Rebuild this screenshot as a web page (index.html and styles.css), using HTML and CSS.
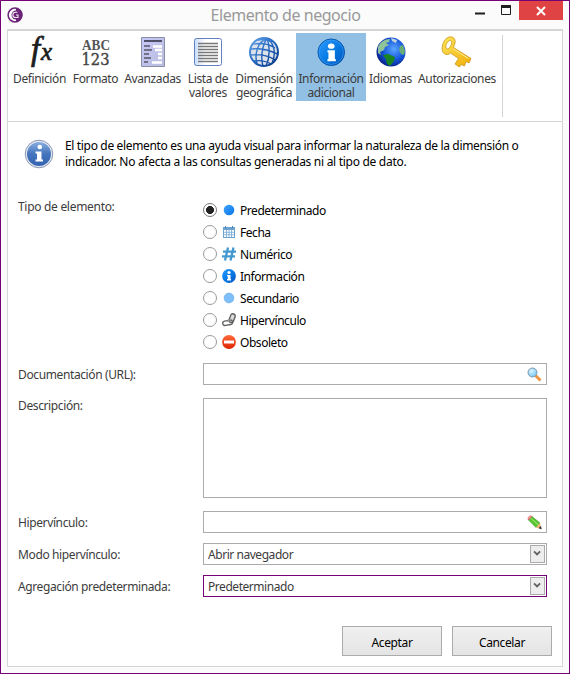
FILE: index.html
```html
<!DOCTYPE html>
<html lang="es">
<head>
<meta charset="utf-8">
<title>Elemento de negocio</title>
<link rel="stylesheet" href="styles.css">
</head>
<body>
<svg class="defs" width="0" height="0" aria-hidden="true">
  <defs>
    <linearGradient id="blue" x1="0" y1="0" x2="1" y2="1"><stop offset="0" stop-color="#2c9cff"/><stop offset=".5" stop-color="#087be5"/><stop offset="1" stop-color="#0054bd"/></linearGradient>
    <linearGradient id="dot" x1="0" y1="0" x2="1" y2="1"><stop offset="0" stop-color="#3fa4ff"/><stop offset="1" stop-color="#0874e8"/></linearGradient>
    <linearGradient id="steel" x1="0" y1="0" x2="0" y2="1"><stop offset="0" stop-color="#87aee0"/><stop offset=".5" stop-color="#4474bd"/><stop offset="1" stop-color="#3563b0"/></linearGradient>
    <linearGradient id="page" x1="0" y1="0" x2="1" y2="1"><stop offset="0" stop-color="#c8c8fa"/><stop offset="1" stop-color="#b8bddc"/></linearGradient>
    <linearGradient id="sheet" x1="0" y1="0" x2="1" y2="0"><stop offset="0" stop-color="#c7dcfb"/><stop offset=".4" stop-color="#fff"/></linearGradient>
    <radialGradient id="ocean" cx=".6" cy=".4" r=".65"><stop offset="0" stop-color="#5ba7ff"/><stop offset=".55" stop-color="#1658dc"/><stop offset="1" stop-color="#061f83"/></radialGradient>
    <linearGradient id="globe" x1="0" y1="0" x2="1" y2="1"><stop offset="0" stop-color="#65a6ed"/><stop offset=".5" stop-color="#2265bd"/><stop offset="1" stop-color="#073580"/></linearGradient>
    <linearGradient id="gold" x1="0" y1="0" x2="1" y2="1"><stop offset="0" stop-color="#ffe45c"/><stop offset="1" stop-color="#efae08"/></linearGradient>
    <linearGradient id="red" x1="0" y1="0" x2="0" y2="1"><stop offset="0" stop-color="#ff6a3c"/><stop offset="1" stop-color="#dc2400"/></linearGradient>
    <radialGradient id="lens" cx=".4" cy=".35" r=".7"><stop offset="0" stop-color="#d8f4ff"/><stop offset="1" stop-color="#72c1ee"/></radialGradient>
    <symbol id="info" viewBox="0 0 30 30"><circle cx="15" cy="15" r="14" fill="url(#blue)" stroke="#0752a8" stroke-width="1"/><circle cx="15" cy="15" r="12.800" fill="none" stroke="#48a3f5" stroke-width=".8" opacity=".7"/><ellipse cx="15" cy="8.600" rx="3.500" ry="2.700" fill="#fff"/><path d="M11 13h7.800v9h1v2.500h-8.800v-2.500h1v-7h-1z" fill="#fff"/></symbol>
    <symbol id="chev" viewBox="0 0 15 18"><path d="M3.500 6 7 9.500 10.500 6" fill="none" stroke="#606060" stroke-width="2"/></symbol>
  </defs>
</svg>
<div class="window">
  <header class="titlebar">
    <svg class="logo" viewBox="0 0 16 16"><circle cx="8" cy="8" r="6.900" fill="#fff" stroke="#6b2378" stroke-width="1.500"/><path d="M9 1.500a6.500 6.500 0 0 1 0 13z" fill="#6b2378"/><path d="M9 3.500a4.500 4.500 0 0 0 0 9z" fill="#6b2378"/><path d="M10.500 5.300H8.500a2.600 2.600 0 0 0 0 5.200h2.500V8H9" fill="none" stroke="#f3eaf4" stroke-width="1.100"/></svg>
    <h1>Elemento de negocio</h1>
    <div class="controls">
      <svg class="min" viewBox="0 0 10 12"><path d="M0 11.500h10" stroke="#1e1e1e" stroke-width="2"/></svg>
      <svg class="max" viewBox="0 0 10 10"><path d="M.5 0v9.500h9V0" fill="none" stroke="#1e1e1e"/><path d="M0 1.500h10" stroke="#1e1e1e" stroke-width="3"/></svg>
      <button class="close"><svg viewBox="0 0 10 10"><path d="m1 1 8 8M9 1 1 9" stroke="#fff" stroke-width="2"/></svg></button>
    </div>
  </header>
  <main class="panel">
    <nav class="ribbon">
      <div class="tab t1"><svg class="fx" viewBox="0 0 32 32"><text x="7" y="24" font-size="33">f</text><text x="17" y="24" font-size="25">x</text></svg><span>Definición</span></div>
      <div class="tab t2"><svg class="glyph" viewBox="0 0 32 32"><text x="2" y="14" class="abc" textLength="28" lengthAdjust="spacingAndGlyphs">ABC</text><text x="1.500" y="28.500" class="num" textLength="28" lengthAdjust="spacingAndGlyphs">123</text></svg><span>Formato</span></div>
      <div class="tab t3"><svg viewBox="0 0 32 32"><path d="M4.500 1.500h23v29h-23z" fill="url(#page)" stroke="#8b8ca8"/><path d="M7 5h18" stroke="#50506a" stroke-width="2"/><path d="M7 10h6M7 14h8M7 18h5M7 22h7M7 26h4" stroke="#555568" stroke-width="1.400"/><path d="M16 10.500h9M18 14h7M21 18h4M21 22h4M15 26.500h10" stroke="#fff" stroke-width="2.400"/></svg><span>Avanzadas</span></div>
      <div class="tab t4"><svg viewBox="0 0 32 32"><rect x="2.500" y="2.500" width="27" height="27" rx="2" fill="url(#sheet)" stroke="#6482c0"/><path d="M6 7.500h20M6 10.500h20M6 13.500h20M6 16.500h20M6 19.500h20M6 22.500h20M6 25.500h20" stroke="#777" stroke-width="1.500"/></svg><span>Lista de</span><span class="l2">valores</span></div>
      <div class="tab t5"><svg viewBox="0 0 32 32"><circle cx="16" cy="16" r="14" fill="#dce2e9" stroke="url(#globe)" stroke-width="2"/><g fill="none" stroke="url(#globe)" stroke-width="1.400"><path d="M19 2.500C10 6 6 17 9 28M19 2.500C15 8 12 20 15 30M19 2.500c3 7 3 19-1 27.500M19 2.500c8 5 9 16 5 25M5 8c7-1 16 0 22 4M2.500 13c9-1 19 1 27 5M2.500 19c8-1 18 1 25 5M6 25c6-1 12 0 17 3M10 4c5-1 10 0 14 2"/></g></svg><span>Dimensión</span><span class="l2">geográfica</span></div>
      <div class="tab t6 active"><svg viewBox="0 0 32 32"><use href="#info" x="2" y="2" width="28.500" height="28.500"/></svg><span>Información</span><span class="l2">adicional</span></div>
      <div class="tab t7"><svg viewBox="0 0 32 32"><circle cx="16" cy="16" r="14.500" fill="url(#ocean)"/><path d="M3 11c2-5 7-8 12-8l-1 3-3 1 3 2-4 2-1 3-4 2 1 3-3-2z" fill="#8fc49a"/><path d="M8 19l5-1 7 3-1 4-4 5-3-2-1-5z" fill="#188522"/><path d="M25 10l3-1 2 6-1 4-3-1-2-4z" fill="#68ac79"/><path d="M16 2l6 2-1 3-4-2z" fill="#c3d6df"/></svg><span>Idiomas</span></div>
      <div class="tab t8"><svg viewBox="0 0 32 32"><g fill="url(#gold)" stroke="#c48d0a" stroke-width=".7"><path fill-rule="evenodd" d="M8 1c4-1 7 2 6 6-.3 2-1 3-1.500 4.500L30 22.500 28 27l-3-1.500-1.500 4.500-3.500-1.500L18.500 31 14 28l3.500-5.500-8-5.500c-2 2-5 2-7 0-3-3-1-14 5.500-16zM8.500 4.500C5.500 6 4 11 5.500 12.500c1.500 1.500 4-1.500 5-4.500.6-2.500-.5-4-2-3.500z"/></g><path d="m12.500 13 15 9.500" stroke="#fff09a" stroke-width="1"/></svg><span>Autorizaciones</span></div>
      <div class="sep"></div>
    </nav>
    <section class="note">
      <svg viewBox="0 0 30 30"><circle cx="15" cy="15" r="13.800" fill="#e4e7ed" stroke="#8b98b5"/><circle cx="15" cy="15" r="12" fill="url(#steel)"/><circle cx="15.800" cy="8" r="2.300" fill="#fff"/><path d="M11.500 12.500h6v8h1.500v2h-7.500v-2H13v-6h-1.500z" fill="#fff"/></svg>
      <p><span class="n1">El tipo de elemento es una ayuda visual para informar la naturaleza de la dimensión o</span><br><span class="n2">indicador. No afecta a las consultas generadas ni al tipo de dato.</span></p>
    </section>
    <form class="form">
      <div class="row types"><label>Tipo de elemento:</label>
        <div class="options">
          <div class="opt"><i class="radio on"></i><svg viewBox="0 0 14 14"><circle cx="7" cy="7" r="5.300" fill="url(#dot)"/></svg><span>Predeterminado</span></div>
          <div class="opt"><i class="radio"></i><svg viewBox="0 0 14 14"><path d="M1 2h12v11H1z" fill="#6aa3d2"/><path d="M2 5h10v7H2z" fill="#fff"/><path d="M4.500 5v7M7 5v7M9.500 5v7M2 7.300h10M2 9.700h10" stroke="#72a8d4" stroke-width=".8"/><path d="M3.500 1v2M10.500 1v2" stroke="#4a82b3"/></svg><span>Fecha</span></div>
          <div class="opt"><i class="radio"></i><svg viewBox="0 0 14 14"><path d="M6 .5 3 13.500M11.500.5l-3 13M1 4.700h13M0 9.300h13" stroke="#4398cf" stroke-width="2.300"/></svg><span>Numérico</span></div>
          <div class="opt"><i class="radio"></i><svg viewBox="0 0 14 14"><circle cx="7" cy="7" r="6.900" fill="url(#blue)"/><circle cx="7" cy="3.500" r="1.600" fill="#fff"/><path d="M5 6h3.500v4H9v1.500H5V10h.8V7.300H5z" fill="#fff"/></svg><span>Información</span></div>
          <div class="opt"><i class="radio"></i><svg viewBox="0 0 14 14"><circle cx="7" cy="7" r="4.900" fill="#7dbffb" stroke="#68aae9" stroke-width=".6"/></svg><span>Secundario</span></div>
          <div class="opt"><i class="radio"></i><svg viewBox="0 0 14 14"><g fill="none" stroke="#606060" stroke-width="1.400"><rect x="5.500" y="3" width="9" height="4.600" rx="2.300" transform="rotate(-70 10 5.200)" fill="#ddd"/><rect x=".7" y="7.600" width="10" height="4.400" rx="2.200" transform="rotate(-10 5.500 10)"/><path d="m5 8.500 4-2.500" stroke="#999"/></g></svg><span>Hipervínculo</span></div>
          <div class="opt"><i class="radio"></i><svg viewBox="0 0 14 14"><circle cx="7" cy="7" r="6.900" fill="url(#red)"/><path d="M2 5.500h10v3H2z" fill="#fff"/></svg><span>Obsoleto</span></div>
        </div>
      </div>
      <div class="row"><label>Documentación (URL):</label><div class="field"><svg class="tool" viewBox="0 0 15 15"><path d="m8.500 8.500 5 5" stroke="#ef9440" stroke-width="3"/><circle cx="5.500" cy="5.500" r="4.500" fill="url(#lens)" stroke="#7e99ad"/></svg></div></div>
      <div class="row desc"><label>Descripción:</label><div class="field area"></div></div>
      <div class="row"><label>Hipervínculo:</label><div class="field"><svg class="tool" viewBox="0 0 15 15"><path d="M1.500 5 5 1.500l8 6.500-4 4.500z" fill="#56c52f" stroke="#3c9827" stroke-width=".6"/><path d="M1.500 5 5 1.500C3 .2 0 2 1.500 5z" fill="#f9b0a8" stroke="#d74848" stroke-width=".7"/><path d="m9 12.500 4-4.500 1.500 6z" fill="#efb178"/><path d="m11.500 13.200 2.500-2.200.7 3.200z" fill="#333"/><path d="m4 3.500 7.500 6.500" stroke="#a5ed75"/></svg></div></div>
      <div class="row"><label>Modo hipervínculo:</label><div class="field select"><span>Abrir navegador</span><svg class="arrow"><use href="#chev"/></svg></div></div>
      <div class="row"><label>Agregación predeterminada:</label><div class="field select focus"><span>Predeterminado</span><svg class="arrow"><use href="#chev"/></svg></div></div>
    </form>
    <footer class="actions"><button type="button">Aceptar</button><button type="button">Cancelar</button></footer>
  </main>
</div>
</body>
</html>
```
FILE: styles.css
```css
* { box-sizing: border-box; }
body { margin: 0; font: 12px/14px "Noto Sans", "Open Sans", sans-serif; letter-spacing: -.38px; color: #3c3c3c; }
svg { display: block; flex: none; }
.defs { position: absolute; }
.window { width: 570px; height: 674px; border: 1px solid #760076; background: #fbfbfb; padding: 0 6px 6px; display: flex; flex-direction: column; }
.titlebar { height: 28px; flex: none; display: grid; grid-template-columns: 108px 1fr 108px; }
.logo { width: 16px; height: 16px; margin: 6px 0 0; }
h1 { margin: 0; padding: 2px 0 0 1px; text-align: center; white-space: nowrap; font-size: 16px; line-height: 24px; font-weight: 400; color: #999; letter-spacing: -.45px; }
.controls { display: flex; justify-content: flex-end; align-items: flex-start; }
.min { width: 10px; height: 12px; margin: 1px 16px 0 0; overflow: visible; }
.max { width: 10px; height: 10px; margin: 4px 8px 0 0; }
.close { width: 44px; height: 19px; border: 0; padding: 0; background: #e04343; display: grid; place-items: center; }
.close svg { width: 10px; height: 10px; }
.panel { flex: 1; background: #fff; border: 1px solid #d5d5d5; border-top-width: 2px; display: flex; flex-direction: column; }
.ribbon { height: 91px; flex: none; border-bottom: 1px solid #d5d5d5; padding: 2px 0 0 1px; display: flex; align-items: flex-start; }
.tab { height: 68px; padding-top: 3px; display: flex; flex-direction: column; align-items: center; text-align: center; white-space: nowrap; }
.tab > svg { width: 32px; height: 32px; }
.tab > span { margin-top: 4px; }
.tab > .l2 { margin-top: 0; }
.t1 { width: 61px; } .t2 { width: 51px; } .t3 { width: 63px; } .t4 { width: 48px; }
.t5 { width: 64px; } .t6 { width: 70px; } .t7 { width: 49px; } .t8 { width: 84px; }
.active { background: #91c0e4; }
.fx { font-family: "Liberation Serif", serif; font-style: italic; fill: #1c1c1c; stroke: #1c1c1c; stroke-width: .7px; letter-spacing: 0; overflow: visible; }
.glyph { font-family: "Liberation Serif", serif; fill: #555; letter-spacing: 0; }
.abc { font-size: 15px; font-weight: 700; }
.num { font-family: "DejaVu Serif", serif; font-size: 16px; fill: #444; stroke: #444; stroke-width: .4px; }
.sep { width: 1px; height: 82px; margin: 2px 0 0 3px; background: #d5d5d5; }
.note { display: flex; padding: 17px 0 0 16px; height: 77px; flex: none; color: #000; }
.note svg { width: 30px; height: 30px; }
.note p { margin: -1px 0 0 11px; line-height: 16px; white-space: nowrap; }
.n1 { letter-spacing: -.34px; }
.n2 { letter-spacing: -.29px; }
.form { padding-left: 10px; }
.row { display: grid; grid-template-columns: 185px 344px; grid-template-rows: 100%; height: 22px; margin-bottom: 10px; }
.row label { line-height: 24px; }
.row.types { height: 154px; }
.row.types label { line-height: 15px; letter-spacing: -.3px; }
.opt { height: 22px; display: flex; align-items: center; color: #000; letter-spacing: -.45px; }
.opt span { padding-top: 2px; }
.opt svg { width: 14px; height: 14px; margin: 0 4px 0 5px; }
.radio { width: 14px; height: 14px; border: 1px solid #999; border-radius: 50%; background: #fff; }
.on { background: radial-gradient(circle, #222 0 3.700px, #fff 4.300px); border-color: #777; }
.field { border: 1px solid #ababab; background: #fff; display: flex; align-items: center; }
.tool { width: 15px; height: 15px; margin-left: auto; margin-right: 4px; }
.row.desc { height: 100px; margin: 13px 0; }
.row.desc label { line-height: 15px; }
.select { justify-content: space-between; padding: 0 1px 0 4px; letter-spacing: -.45px; }
.select span { padding-top: 2px; }
.focus { border-color: #760076; }
.arrow { width: 15px; height: 18px; border: 1px solid #ababab; background: #ededed; }
.actions { display: flex; justify-content: flex-end; gap: 10px; padding: 19px 10px 0 0; }
.actions button { width: 100px; height: 30px; padding: 4px 0 0; border: 1px solid #ababab; background: linear-gradient(#f0f0f0, #e4e4e4); font: inherit; letter-spacing: inherit; color: #000; }
```
